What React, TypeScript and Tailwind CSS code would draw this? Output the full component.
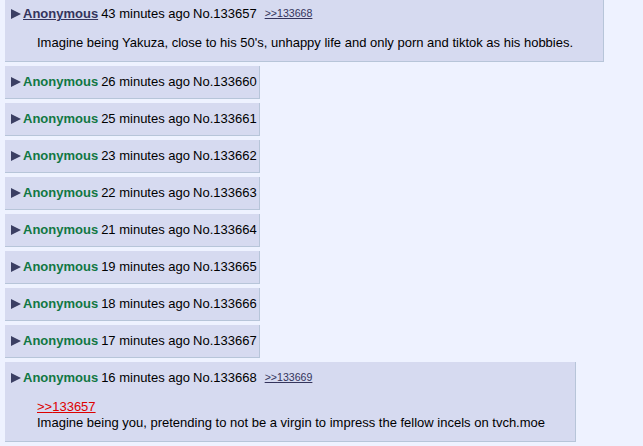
import { FC } from "react";

interface Post {
  name: string;
  email?: boolean;
  time: string;
  no: string;
  backlink?: string;
  quote?: string;
  body?: string;
}

const posts: Post[] = [
  {
    name: "Anonymous",
    email: true,
    time: "43 minutes ago",
    no: "133657",
    backlink: "133668",
    body: "Imagine being Yakuza, close to his 50's, unhappy life and only porn and tiktok as his hobbies.",
  },
  { name: "Anonymous", time: "26 minutes ago", no: "133660" },
  { name: "Anonymous", time: "25 minutes ago", no: "133661" },
  { name: "Anonymous", time: "23 minutes ago", no: "133662" },
  { name: "Anonymous", time: "22 minutes ago", no: "133663" },
  { name: "Anonymous", time: "21 minutes ago", no: "133664" },
  { name: "Anonymous", time: "19 minutes ago", no: "133665" },
  { name: "Anonymous", time: "18 minutes ago", no: "133666" },
  { name: "Anonymous", time: "17 minutes ago", no: "133667" },
  {
    name: "Anonymous",
    time: "16 minutes ago",
    no: "133668",
    backlink: "133669",
    quote: "133657",
    body: "Imagine being you, pretending to not be a virgin to impress the fellow incels on tvch.moe",
  },
];

const Arrow = () => (
  <svg width="10" height="10" viewBox="0 0 10 10" className="mr-[2px] shrink-0">
    <path d="M0 0 L10 5 L0 10 Z" fill="#3b3f63" />
  </svg>
);

const PostBox: FC<{ post: Post; first?: boolean }> = ({ post, first }) => {
  return (
    <div
      className={`w-fit bg-[#d6daf0] border-r border-b border-[#b7c5d9] pl-[6px] pr-[2px] pt-[6px] mb-[4px] ${
        post.body ? "pb-[10px]" : "pb-[7px]"
      } ${first ? "-mt-[2px]" : ""}`}
    >
      {/* post info */}
      <div className="flex items-center leading-[19px] whitespace-nowrap">
        <Arrow />
        {post.email ? (
          <span className="font-bold text-[#34345c] underline">{post.name}</span>
        ) : (
          <span className="font-bold text-[#117743]">{post.name}</span>
        )}
        <span className="ml-[3px]">{post.time}</span>
        <span className="ml-[3px]">No.{post.no}</span>
        {post.backlink && (
          <span className="ml-[8px] text-[10.6px] text-[#34345c] underline">
            &gt;&gt;{post.backlink}
          </span>
        )}
      </div>
      {/* blockquote */}
      {post.body && (
        <div className="mt-[12px] ml-[26px] mr-[28px] leading-[16px] whitespace-nowrap">
          {post.quote && (
            <div className="text-[#dd0000] underline">&gt;&gt;{post.quote}</div>
          )}
          <div>{post.body}</div>
        </div>
      )}
    </div>
  );
};

export default function App() {
  return (
    <div
      className="min-h-screen bg-[#eef2ff] text-black text-[13px] pl-[5px] overflow-hidden"
      style={{ fontFamily: '"Liberation Sans", Arial, sans-serif' }}
    >
      <div className="flex flex-col items-start">
        {posts.map((p, i) => (
          <PostBox key={i} post={p} first={i === 0} />
        ))}
      </div>
    </div>
  );
}
